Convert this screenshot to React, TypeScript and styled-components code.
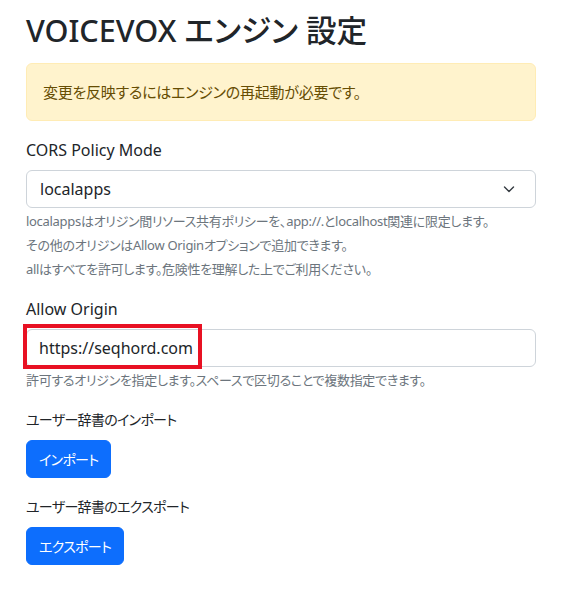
import styled, { createGlobalStyle } from "styled-components";

const GlobalStyle = createGlobalStyle`
  * { box-sizing: border-box; }
  body {
    margin: 0;
    background: #ffffff;
    color: #212529;
    font-family: "Noto Sans", "Noto Sans CJK JP", sans-serif;
    font-size: 16px;
    line-height: 1.5;
    font-feature-settings: "palt" 1;
  }
`;

const helpLines = [
  "localappsはオリジン間リソース共有ポリシーを、app://.とlocalhost関連に限定します。",
  "その他のオリジンはAllow Originオプションで追加できます。",
  "allはすべてを許可します。危険性を理解した上でご利用ください。",
];

export default function App() {
  return (
    <>
      <GlobalStyle />
      <Page>
        <Title>VOICEVOX エンジン 設定</Title>
        <Alert>変更を反映するにはエンジンの再起動が必要です。</Alert>

        <Field>
          <Label>CORS Policy Mode</Label>
          <SelectBox>
            <span>localapps</span>
            <svg width="16" height="12" viewBox="0 0 16 12">
              <path
                d="M3.5 4l4.5 4.5 4.5-4.5"
                fill="none"
                stroke="#343a40"
                strokeWidth="1.4"
                strokeLinecap="round"
                strokeLinejoin="round"
              />
            </svg>
          </SelectBox>
          {helpLines.map((line) => (
            <HelpText key={line}>{line}</HelpText>
          ))}
        </Field>

        <Field>
          <Label>Allow Origin</Label>
          <InputWrap>
            <TextInput defaultValue="https://seqhord.com" />
            <Highlight />
          </InputWrap>
          <HelpText>
            許可するオリジンを指定します。スペースで区切ることで複数指定できます。
          </HelpText>
        </Field>

        <Field>
          <Label $ja>ユーザー辞書のインポート</Label>
          <div>
            <PrimaryButton>インポート</PrimaryButton>
          </div>
        </Field>

        <Field>
          <Label $ja>ユーザー辞書のエクスポート</Label>
          <div>
            <PrimaryButton>エクスポート</PrimaryButton>
          </div>
        </Field>
      </Page>
    </>
  );
}

const Page = styled.div`
  width: 573px;
  padding: 12px 37px 20px 26px;
  display: flex;
  flex-direction: column;
`;

const Title = styled.h1`
  margin: 0 0 14px;
  font-size: 30.6px;
  font-weight: 500;
  line-height: 1.2;
`;

const Alert = styled.div`
  padding: 16px;
  margin-bottom: 17px;
  background: #fff3cd;
  border: 1px solid #ffecb5;
  border-radius: 6px;
  color: #664d03;
  font-size: 15px;
  line-height: 24px;
  letter-spacing: -0.25px;
`;

const Field = styled.div`
  display: flex;
  flex-direction: column;
  margin-bottom: 17px;
`;

const Label = styled.label<{ $ja?: boolean }>`
  margin-bottom: 8px;
  line-height: 24px;
  font-size: ${(p) => (p.$ja ? "14px" : "16px")};
  letter-spacing: ${(p) => (p.$ja ? "-0.7px" : "normal")};
`;

const SelectBox = styled.div`
  height: 38px;
  display: flex;
  align-items: center;
  justify-content: space-between;
  padding: 0 18px 0 13px;
  border: 1px solid #ced4da;
  border-radius: 6px;
  background: #fff;
`;

const InputWrap = styled.div`
  position: relative;
`;

const TextInput = styled.input`
  display: block;
  width: 100%;
  height: 38px;
  padding: 0 12px;
  border: 1px solid #ced4da;
  border-radius: 6px;
  font: inherit;
  color: #212529;
  outline: none;
`;

const Highlight = styled.div`
  position: absolute;
  left: -3px;
  top: -5px;
  width: 179px;
  height: 45px;
  border: 4px solid #e81123;
  pointer-events: none;
`;

const HelpText = styled.div`
  margin-top: 3px;
  font-size: 13px;
  line-height: 21px;
  letter-spacing: -0.3px;
  color: #6c757d;
`;

const PrimaryButton = styled.button`
  height: 38px;
  padding: 0 12px;
  border: 1px solid #0d6efd;
  border-radius: 6px;
  background: #0d6efd;
  color: #fff;
  font-family: inherit;
  font-size: 14px;
  letter-spacing: -0.7px;
  font-feature-settings: "palt" 1;
  cursor: pointer;
`;
